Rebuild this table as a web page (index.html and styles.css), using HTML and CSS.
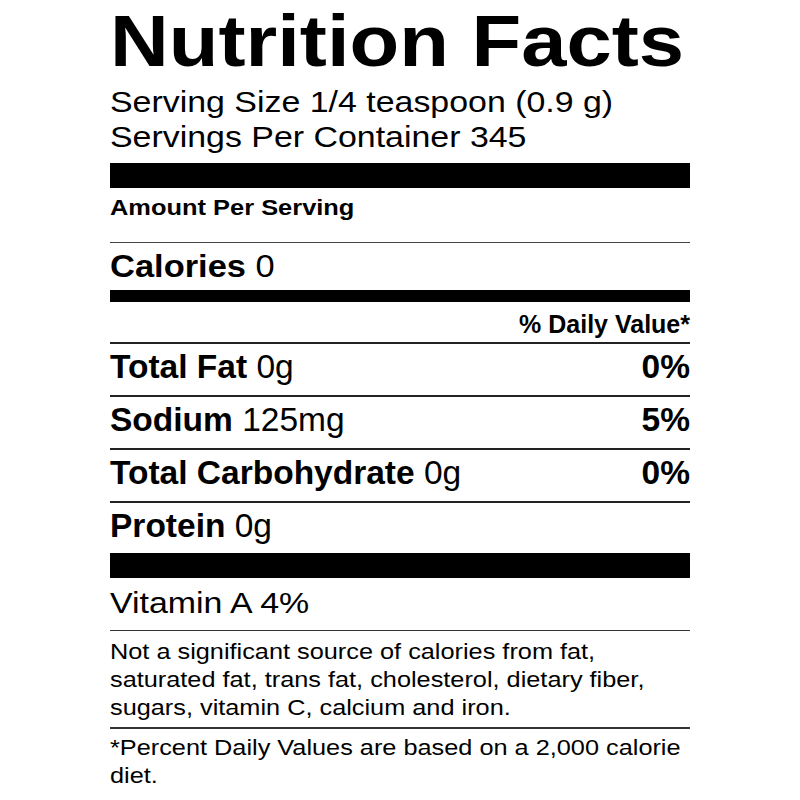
FILE: index.html
```html
<!DOCTYPE html>
<html lang="en">
<head>
<meta charset="utf-8">
<title>Nutrition Facts</title>
<link rel="stylesheet" href="styles.css">
</head>
<body>
<section class="label">
  <h1 class="title wide">Nutrition Facts</h1>
  <div class="serving">
    <p class="serving-line wide">Serving Size 1/4 teaspoon (0.9 g)</p>
    <p class="serving-line wide">Servings Per Container 345</p>
  </div>
  <div class="bar bar-lg"></div>
  <div class="amount-row"><div class="amount wide">Amount Per Serving</div></div>
  <div class="calories-row"><div class="calories wide"><b>Calories</b> 0</div></div>
  <div class="bar bar-md"></div>
  <div class="dv-head">% Daily Value*</div>
  <div class="nutrient"><span><b>Total Fat</b> 0g</span><b class="pct">0%</b></div>
  <div class="nutrient"><span><b>Sodium</b> 125mg</span><b class="pct">5%</b></div>
  <div class="nutrient"><span><b>Total Carbohydrate</b> 0g</span><b class="pct">0%</b></div>
  <div class="nutrient nutrient-last"><span><b>Protein</b> 0g</span></div>
  <div class="bar bar-lg"></div>
  <div class="vitamin-row"><div class="vitamin wide">Vitamin A 4%</div></div>
  <div class="note-row"><p class="note wide">Not a significant source of calories from fat, saturated fat, trans fat, cholesterol, dietary fiber, sugars, vitamin C, calcium and iron.</p></div>
  <div class="note-row note-row-last"><p class="note wide">*Percent Daily Values are based on a 2,000 calorie diet.</p></div>
</section>
</body>
</html>
```
FILE: styles.css
```css
html, body {
  margin: 0;
  padding: 0;
  background: #fff;
}

body {
  font-family: "Liberation Sans", Arial, sans-serif;
  color: #000;
}

.label {
  width: 580px;
  margin: 0 auto;
  padding-top: 5px;
}

/* the label's type is set slightly expanded */
.wide {
  width: 514px;
  transform: scaleX(1.13);
  transform-origin: 0 0;
}

.title {
  margin: 0;
  font-size: 72px;
  line-height: 72px;
  font-weight: 700;
  white-space: nowrap;
}

.serving {
  padding-top: 7px;
  padding-bottom: 9px;
}

.serving-line {
  margin: 0;
  font-size: 30px;
  line-height: 35px;
  white-space: nowrap;
}

.bar {
  background: #000;
}

.bar-lg {
  height: 25px;
}

.bar-md {
  height: 12px;
}

.amount-row {
  padding-top: 6px;
  padding-bottom: 20px;
  border-bottom: 1px solid #444;
}

.amount {
  font-size: 22.5px;
  line-height: 28px;
  font-weight: 700;
  white-space: nowrap;
}

.calories-row {
  padding-top: 5px;
  padding-bottom: 6px;
}

.calories {
  font-size: 30.5px;
  line-height: 36px;
  white-space: nowrap;
}

.dv-head {
  font-size: 25px;
  line-height: 28px;
  font-weight: 700;
  text-align: right;
  padding-top: 8px;
  padding-bottom: 4px;
  border-bottom: 2px solid #222;
}

.nutrient {
  display: flex;
  justify-content: space-between;
  font-size: 33.5px;
  line-height: 40px;
  padding-top: 3px;
  padding-bottom: 8px;
  border-bottom: 2px solid #222;
  white-space: nowrap;
}

.nutrient-last {
  padding-bottom: 7px;
  border-bottom: none;
}

.vitamin-row {
  padding-top: 7px;
  padding-bottom: 9px;
  border-bottom: 1.5px solid #333;
}

.vitamin {
  font-size: 30px;
  line-height: 36px;
  white-space: nowrap;
}

.note-row {
  padding-top: 7px;
  padding-bottom: 5px;
}

.note-row-last {
  padding-top: 5px;
  border-top: 2px solid #333;
}

.note {
  margin: 0;
  font-size: 22.4px;
  line-height: 28px;
}
```
